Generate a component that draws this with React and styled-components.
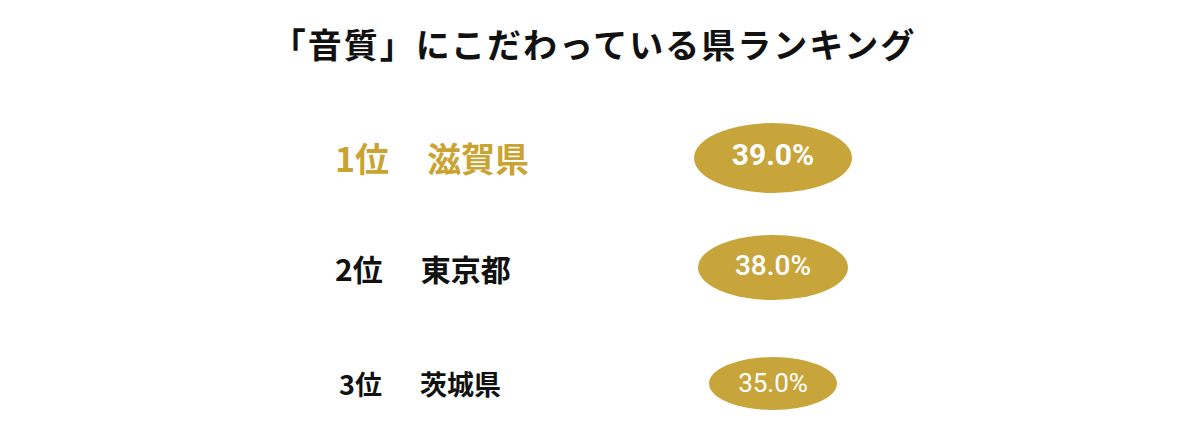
import React from "react";
import styled, { createGlobalStyle } from "styled-components";

const Global = createGlobalStyle`
  html, body { margin: 0; padding: 0; background: #ffffff; }
  body { font-family: "Noto Sans CJK JP", "Noto Sans", sans-serif; }
`;

const Page = styled.div`
  width: 1200px;
  height: 425px;
  padding-top: 24px;
  box-sizing: border-box;
  overflow: hidden;
`;

const Title = styled.h1`
  margin: 0;
  padding-right: 12px;
  text-align: center;
  font-family: "Noto Sans CJK JP", sans-serif;
  font-weight: 700;
  font-size: 34px;
  line-height: 40px;
  letter-spacing: 2px;
  color: #111111;
`;

const List = styled.div`
  width: 530px;
  margin: 0 auto;
  display: flex;
  flex-direction: column;
`;

const Row = styled.div`
  display: grid;
  grid-template-columns: 358px 160px;
  align-items: center;
  height: ${(p) => p.$h}px;
  margin-top: ${(p) => p.$top}px;
`;

const Label = styled.div`
  display: flex;
  align-items: center;
  gap: 38px;
  padding-left: ${(p) => p.$indent}px;
  font-family: "Noto Sans CJK JP", sans-serif;
  font-size: ${(p) => p.$size}px;
  font-weight: ${(p) => p.$weight};
  color: ${(p) => (p.$gold ? "#c9a432" : "#111111")};
  line-height: 1;
`;

const Badge = styled.div`
  justify-self: center;
  width: ${(p) => p.$w}px;
  height: ${(p) => p.$h}px;
  border-radius: 50%;
  background: #c8a53b;
  color: #ffffff;
  display: flex;
  align-items: center;
  justify-content: center;
  box-sizing: border-box;
  padding-bottom: ${(p) => p.$lift}px;
  font-family: Roboto, "Liberation Sans", sans-serif;
  font-size: ${(p) => p.$size}px;
  font-weight: ${(p) => p.$weight};
  line-height: 1;
`;

const rows = [
  { rank: "1位", name: "滋賀県", pct: "39.0%", gold: true, size: 34, weight: 700, indent: 0, top: 59, w: 158, h: 70, psize: 30, pweight: 700, lift: 6 },
  { rank: "2位", name: "東京都", pct: "38.0%", gold: false, size: 30, weight: 700, indent: 0, top: 42, w: 150, h: 65, psize: 28, pweight: 500, lift: 3 },
  { rank: "3位", name: "茨城県", pct: "35.0%", gold: false, size: 27, weight: 700, indent: 4, top: 57, w: 128, h: 53, psize: 26, pweight: 400, lift: 1 },
];

export default function App() {
  return (
    <>
      <Global />
      <Page>
        <Title>「音質」にこだわっている県ランキング</Title>
        <List>
          {rows.map((r) => (
            <Row key={r.rank} $h={r.h} $top={r.top}>
              <Label $size={r.size} $weight={r.weight} $gold={r.gold} $indent={r.indent}>
                <span>{r.rank}</span>
                <span>{r.name}</span>
              </Label>
              <Badge $w={r.w} $h={r.h} $size={r.psize} $weight={r.pweight} $lift={r.lift}>
                {r.pct}
              </Badge>
            </Row>
          ))}
        </List>
      </Page>
    </>
  );
}
